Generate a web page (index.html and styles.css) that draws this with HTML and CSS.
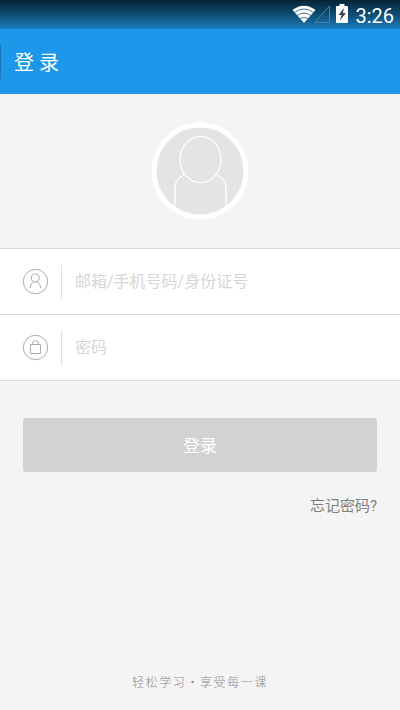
FILE: index.html
```html
<!DOCTYPE html>
<html lang="zh-CN">
<head>
<meta charset="utf-8">
<title>登录</title>
<link rel="stylesheet" href="styles.css">
</head>
<body>
<div class="screen">
  <div class="status">
    <svg class="wifi" width="24" height="18" viewBox="0 0 24 18"><path d="M.5 5Q12-3.5 23.5 5L12 18Z" fill="#fff"/><path d="M2.500 7.400Q12 .6 21.500 7.400M5.200 10.500Q12 5.700 18.800 10.500M8 13.600Q12 10.800 16 13.600" fill="none" stroke="#135078" stroke-width="0.8"/></svg>
    <svg class="signal" width="16" height="18" viewBox="0 0 16 18"><path d="M15.500 1v16.500H.8Z" fill="none" stroke="#4c829f" stroke-width="1"/></svg>
    <svg class="battery" width="12" height="19" viewBox="0 0 12 19"><path d="M3.500 0h5v2H11q1 0 1 1v15q0 1-1 1H1q-1 0-1-1V3q0-1 1-1h2.500Z" fill="#fff"/><path d="M8 4 2.500 11h3L4 16.500 10 9H7Z" fill="#3c474e"/></svg>
    <span class="time">3:26</span>
  </div>
  <header class="bar"><span class="edge"></span><h1>登 录</h1></header>
  <main>
    <div class="profile">
      <svg width="98" height="98" viewBox="0 0 98 98"><circle cx="49" cy="49" r="46" fill="#e4e4e4" stroke="#fff" stroke-width="5"/><g fill="none" stroke="#fff" stroke-width="1.300"><ellipse cx="49.500" cy="37.500" rx="20.500" ry="23.200"/><path d="M33 53Q24 57 24 66V86M66 53Q75 57 75 66V86"/></g></svg>
    </div>
    <div class="fields">
      <div class="field">
        <svg class="icon" width="26" height="26" viewBox="-.5 .5 26 26"><circle cx="13" cy="13" r="12.200"/><ellipse cx="12.800" cy="9.400" rx="3.900" ry="4.100"/><path d="M7.800 19.500C7.800 16 9.500 14 11.500 13.400M18 19.500C18 16 16.300 14 14.200 13.400"/></svg>
        <span class="hint">邮箱/手机号码/身份证号</span>
      </div>
      <div class="field">
        <svg class="icon" width="26" height="26" viewBox="-.5 .5 26 26"><circle cx="13" cy="13" r="12.200"/><path d="M8 10h10v9H8ZM9.700 10Q9.700 6 13 6T16.300 10"/></svg>
        <span class="hint">密码</span>
      </div>
    </div>
    <div class="actions">
      <button class="login" type="button">登录</button>
      <span class="forgot">忘记密码?</span>
    </div>
  </main>
  <footer class="slogan">轻松学习·享受每一课</footer>
</div>
</body>
</html>
```
FILE: styles.css
```css
* { box-sizing: border-box; }
body { margin: 0; font-family: Roboto, "Noto Sans CJK SC", sans-serif; background: #f4f4f4; }
.screen { height: 710px; display: flex; flex-direction: column; overflow: hidden; }
.status {
  height: 29px; flex: none; display: flex; align-items: flex-start;
  padding: 5px 6px 0 0; justify-content: flex-end;
  background: linear-gradient(#052435, #0e486c 45%, #187cbc);
}
.wifi { margin-right: -2px; }
.signal { margin-right: 6px; }
.battery { margin: -1px 7px 0 0; }
.time { color: #fff; font-size: 20px; line-height: 22px; }
.bar { height: 65px; flex: none; display: flex; align-items: center; background: #1d97e9; }
.edge { width: 1px; height: 34px; margin-right: 13px; background: #1679bd; }
h1 { margin: 2px 0 0; color: #fff; font-size: 20px; font-weight: 400; line-height: 30px; }
main { flex: 1; }
.profile { height: 154px; display: flex; justify-content: center; padding-top: 28px; }
.fields { background: #fff; border-top: 1px solid #d9d9d9; }
.field {
  height: 66px; display: flex; align-items: center;
  padding-left: 22px; border-bottom: 1px solid #d9d9d9;
}
.icon { margin-right: 13px; fill: none; stroke: #a3a3a3; stroke-width: 0.9; }
.hint {
  height: 34px; padding-left: 13px; border-left: 1px solid #dedede;
  color: #d6d6d6; font-size: 16px; line-height: 34px;
}
.actions { padding: 37px 23px 0; display: flex; flex-direction: column; }
.login {
  height: 54px; padding: 0 0 2px; border: 0; border-radius: 3px;
  background: #d2d2d2; color: #fff; font: inherit; font-size: 17px;
}
.forgot { align-self: flex-end; margin-top: 22px; color: #7f7f7f; font-size: 15px; line-height: 24px; }
.slogan {
  height: 40px; flex: none; text-align: center; color: #8c8c8c;
  font-family: "Noto Sans CJK SC", sans-serif; font-size: 12px; font-weight: 300;
  line-height: 24px; letter-spacing: 1.6px;
}
```
